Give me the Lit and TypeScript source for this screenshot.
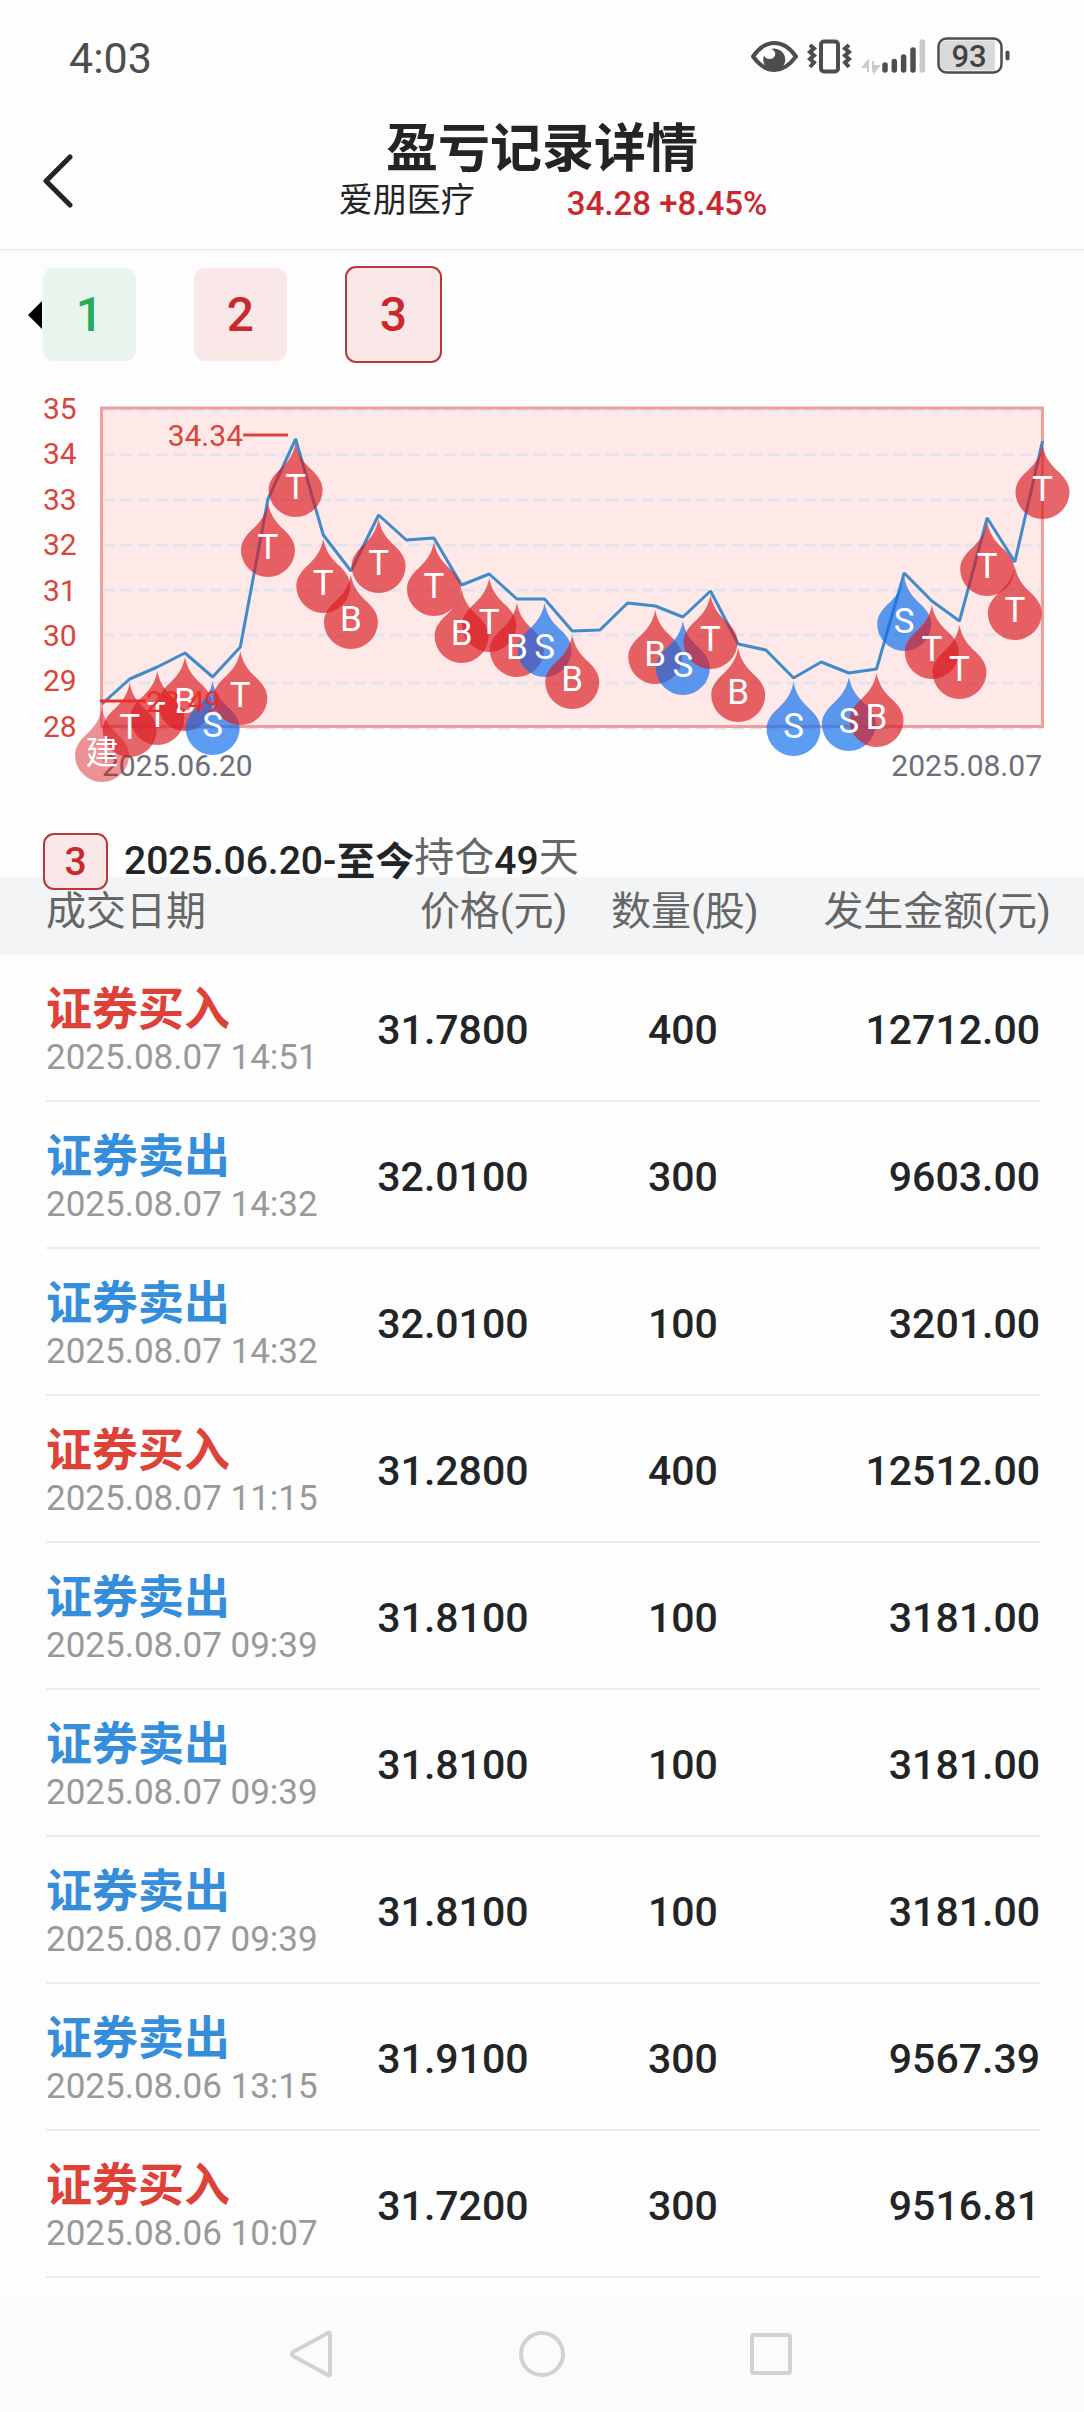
import { LitElement, html, svg, css } from "lit";
import { customElement, state } from "lit/decorators.js";
import { classMap } from "lit/directives/class-map.js";

type Mark = "T" | "B" | "S" | "建" | "";

/* Daily closing position in chart units, with the trade marker of that day. */
const DAYS: [number, Mark][] = [
  [704, "建"], [679, "T"], [667, "T"], [653, "B"], [677, "S"], [647, "T"], [499, "T"],
  [439, "T"], [535, "T"], [571, "B"], [515, "T"], [540, ""], [538, "T"], [585, "B"],
  [574, "T"], [599, "B"], [599, "S"], [631, "B"], [630, ""], [603, ""], [606, "B"],
  [617, "S"], [591, "T"], [644, "B"], [650, ""], [678, "S"], [662, ""], [673, "S"],
  [669, "B"], [573, "S"], [601, "T"], [621, "T"], [518, "T"], [562, "T"], [441, "T"],
];
const LEFT = 102;
const STEP = (1042.5 - LEFT) / (DAYS.length - 1);
const TOP = 390;
const px = (i: number) => LEFT + i * STEP;
const py = (y: number) => y - TOP;

const AXIS = [35, 34, 33, 32, 31, 30, 29, 28];
const GRID = [410, 455, 500, 545, 590, 635, 683, 728];

interface Trade {
  buy: boolean;
  time: string;
  price: string;
  count: string;
  amount: string;
}
const t = (buy: boolean, time: string, price: string, count: string, amount: string): Trade =>
  ({ buy, time, price, count, amount });
const TRADES: Trade[] = [
  t(true, "2025.08.07 14:51", "31.7800", "400", "12712.00"),
  t(false, "2025.08.07 14:32", "32.0100", "300", "9603.00"),
  t(false, "2025.08.07 14:32", "32.0100", "100", "3201.00"),
  t(true, "2025.08.07 11:15", "31.2800", "400", "12512.00"),
  t(false, "2025.08.07 09:39", "31.8100", "100", "3181.00"),
  t(false, "2025.08.07 09:39", "31.8100", "100", "3181.00"),
  t(false, "2025.08.07 09:39", "31.8100", "100", "3181.00"),
  t(false, "2025.08.06 13:15", "31.9100", "300", "9567.39"),
  t(true, "2025.08.06 10:07", "31.7200", "300", "9516.81"),
];

@customElement("trend-chart")
class TrendChart extends LitElement {
  static styles = css`
    :host { display: block; }
    svg { display: block; width: 100%; height: auto; font-family: Roboto, "Noto Sans CJK SC", sans-serif; }
    .axis { font-size: 30px; fill: #d8453c; }
    .date { font-size: 30px; fill: #6c6f78; }
    .grid { stroke: #e1e3ee; stroke-width: 3; stroke-dasharray: 12 6; }
    .area { fill: #ffe8e8; }
    .frame { fill: none; stroke: #f09e9b; stroke-width: 3; }
    .line { fill: none; stroke: #3f8bcb; stroke-width: 3; stroke-linejoin: bevel; }
    .drop { fill: #d91e23; fill-opacity: 0.68; }
    .drop.sell { fill: #0f6eee; }
    .drop.open { fill-opacity: 0.48; }
    .mark { font-size: 35px; fill: #fff; text-anchor: middle; }
    .mark.open { font-size: 33px; }
    .leader { stroke: #d8453c; stroke-width: 3; }
    .low { fill: #ee2d2a; }
    .leader.low { stroke: #ee2d2a; }
  `;

  render() {
    const points = DAYS.map(([y], i) => `${px(i)},${py(y)}`).join(" ");
    const marks = DAYS.map(([y, mark], i) => ({ x: px(i), y: py(y), mark })).filter((d) => d.mark);
    return html`<svg viewBox="0 0 1084 404" role="img" aria-label="2025.06.20 - 2025.08.07">
      <rect class="area" x="101" y=${py(408)} width="942" height="319"></rect>
      ${GRID.map((y) => svg`<line class="grid" x1="102" x2="1043" y1=${py(y)} y2=${py(y)}></line>`)}
      <rect class="frame" x="101.5" y=${py(408)} width="941" height="318.5"></rect>
      ${AXIS.map((v, i) => svg`<text class="axis" x="43" y=${29 + Math.round(i * 45.4)}>${v}</text>`)}
      <text class="date" x="102" y=${py(776)}>2025.06.20</text>
      <text class="date" x="1042" y=${py(776)} text-anchor="end">2025.08.07</text>
      <polyline class="line" points=${points}></polyline>
      ${marks.map((d) => svg`<path
        class=${`drop ${d.mark === "S" ? "sell" : ""} ${d.mark === "建" ? "open" : ""}`}
        transform=${`translate(${d.x} ${d.y})`}
        d="M0 4C2 15 7 22 14 29C21 35 27 42 27 51A27 27 0 0 1 -27 51C-27 42 -21 35 -14 29C-7 22 -2 15 0 4Z"></path>`)}
      ${marks.map((d) => svg`<text class=${`mark ${d.mark === "建" ? "open" : ""}`} x=${d.x} y=${d.y + 60}>${d.mark}</text>`)}
      <line class="leader" x1="243" x2="288" y1=${py(435)} y2=${py(435)}></line>
      <text class="axis" x="243" y=${py(446)} text-anchor="end">34.34</text>
      <line class="leader low" x1="100" x2="146" y1=${py(701)} y2=${py(701)}></line>
      <text class="axis low" x="146" y=${py(712)}>28.49</text>
    </svg>`;
  }
}

@customElement("status-bar")
class StatusBar extends LitElement {
  static styles = css`
    :host { display: flex; align-items: center; justify-content: space-between; height: 112px; padding: 0 72px 0 69px; color: #4d4d4d; font-family: Roboto, sans-serif; }
    .clock { padding-top: 4px; font-size: 43px; line-height: 48px; }
    .icons { display: block; }
    .level { font-size: 31px; font-weight: 500; fill: #434343; text-anchor: middle; }
  `;
  render() {
    return html`
      <time class="clock">4:03</time>
      <svg class="icons" width="262" height="44" viewBox="0 0 262 44" fill="none">
        <path d="M3 22.500C10 12.500 17 9 24.500 9S39 12.500 46 22.500C39 32 32 36 24.500 36S10 32 3 22.500Z" stroke="#4d4d4d" stroke-width="4" stroke-linejoin="round"></path>
        <path d="M21 15A11 11 0 1 1 14 21.500C16 26.500 23.500 26 25 21.500C25.800 18.500 24.500 16 21 15Z" fill="#4d4d4d"></path>
        <rect x="71" y="7.500" width="17" height="30" rx="3" stroke="#4d4d4d" stroke-width="4"></rect>
        <path d="M60 11l4 3.500-4 3.500 4 3.500-4 3.500 4 3.500-4 4.500M99 11l-4 3.500 4 3.500-4 3.500 4 3.500-4 3.500 4 4.500" stroke="#4d4d4d" stroke-width="4"></path>
        <path d="M118 38V28M118 27L113 33H118ZM123 27V38M124 38L129 32H124Z" stroke="#ccc" fill="#ccc" stroke-width="2"></path>
        <path d="M135 31v5M144.300 27.500v8.500M153.600 23v13M163 16v20" stroke="#4d4d4d" stroke-width="5.500" stroke-linecap="round"></path>
        <path d="M172.300 8v28" stroke="#c9c9c9" stroke-width="5.500" stroke-linecap="round"></path>
        <rect x="188.500" y="4.500" width="63" height="34" rx="8" fill="#fff" stroke="#4d4d4d" stroke-width="2.500"></rect>
        <path d="M196 6.500H245V36.500H196A6 6 0 0 1 190 30.500V12.500A6 6 0 0 1 196 6.500Z" fill="#d9d9d9"></path>
        <path d="M257.500 18.500v6" stroke="#4d4d4d" stroke-width="4" stroke-linecap="round"></path>
        <text class="level" x="219" y="33">93</text>
      </svg>`;
  }
}

@customElement("app-root")
class AppRoot extends LitElement {
  static styles = css`
    :host { display: block; background: #fdfdfd; color: #222426; font-family: "Noto Sans CJK SC", sans-serif; }
    * { box-sizing: border-box; }
    button { margin: 0; padding: 0; border: 0; background: none; font: inherit; color: inherit; }
    .page { display: flex; flex-direction: column; min-height: 100vh; }
    .change, .tab, .badge, .span, .trades { font-family: Roboto, "Noto Sans CJK SC", sans-serif; }
    .header { display: grid; grid-template-columns: 86px 1fr 86px; align-items: center; height: 139px; border-bottom: 2px solid #f0f0f0; }
    .back { justify-self: start; padding-left: 43px; }
    .back svg { display: block; }
    .heading { display: flex; flex-direction: column; align-items: center; padding-bottom: 25px; }
    .title { margin: 0; font-size: 52px; line-height: 60px; font-weight: 700; }
    .quote { display: flex; align-items: center; gap: 92px; padding-left: 22px; font-size: 34px; line-height: 46px; }
    .change { padding-top: 12px; font-size: 33px; line-height: 34px; font-weight: 500; color: #c7292e; }
    .rounds { display: flex; align-items: center; height: 127px; padding: 0 28px; }
    .arrow { display: block; margin-right: 1px; }
    .tabs { display: flex; align-items: center; gap: 58px; }
    .tab { width: 93px; height: 93px; border-radius: 11px; background: #fae8e8; color: #c9282d; font-size: 48px; line-height: 93px; font-weight: 500; text-align: center; }
    .tab.gain { background: #e8f5ec; color: #29aa5b; }
    .tab.active { width: 97px; height: 97px; border: 2px solid #b5383c; }
    .chart { margin-top: 12px; }
    .holding { display: flex; align-items: center; height: 57px; margin: 39px 43px -13px; position: relative; font-size: 39px; line-height: 57px; }
    .badge { width: 65px; height: 57px; margin-right: 16px; border: 2px solid #b5383c; border-radius: 11px; background: #fae8e8; color: #c9282d; font-size: 39px; line-height: 54px; font-weight: 500; text-align: center; }
    .span { font-weight: 500; }
    .now { padding-bottom: 6px; font-weight: 700; }
    .unit { padding-bottom: 14px; font-size: 40px; color: #666; }
    .trades { width: 100%; border-collapse: collapse; table-layout: fixed; }
    .c-name { width: 32%; }
    .c-price { width: 21%; }
    .c-count { width: 20%; }
    th { height: 78px; padding: 0 0 8px; background: #f3f4f6; color: #666; font-size: 40px; line-height: 48px; font-weight: 400; white-space: nowrap; text-align: right; }
    th:first-child { padding-left: 46px; text-align: left; }
    th:nth-child(2) { padding-right: 7px; }
    th:nth-child(3) { padding-left: 4px; text-align: center; }
    th:last-child { padding-right: 33px; }
    tbody tr { background: linear-gradient(#ececec, #ececec) 46px 100% / calc(100% - 90px) 2px no-repeat; }
    td { height: 147px; padding: 2px 0 0; font-size: 41px; line-height: 48px; font-weight: 500; white-space: nowrap; text-align: center; }
    td:first-child { padding: 8px 0 0 46px; text-align: left; }
    td:nth-child(2) { padding-right: 46px; text-align: right; }
    td:last-child { padding-right: 44px; text-align: right; }
    .side { display: block; font-family: "Noto Sans CJK SC", sans-serif; font-size: 46px; line-height: 50px; font-weight: 700; color: #348edb; }
    .side.buy { color: #dd4137; }
    .time { display: block; font-size: 35px; line-height: 56px; font-weight: 400; color: #999; }
    .nav { display: flex; align-items: center; justify-content: center; gap: 182px; height: 116px; margin-top: auto; background: #fbfbfb; }
    .nav svg { display: block; }
  `;

  @state() private round = 3;

  render() {
    return html`<div class="page">
      <status-bar></status-bar>
      <header class="header">
        <button class="back" aria-label="返回">
          <svg width="30" height="54" viewBox="0 0 30 54" fill="none" stroke="#222426" stroke-width="5" stroke-linecap="round" stroke-linejoin="round"><path d="M27 3L3 27L27 51"></path></svg>
        </button>
        <div class="heading">
          <h1 class="title">盈亏记录详情</h1>
          <div class="quote"><span>爱朋医疗</span><span class="change">34.28 +8.45%</span></div>
        </div>
      </header>
      <div class="rounds">
        <svg class="arrow" width="14" height="30" viewBox="0 0 14 30"><path d="M14 1V29L0 15Z"></path></svg>
        <div class="tabs">
          ${[1, 2, 3].map((n) => html`<button
            class=${classMap({ tab: true, gain: n === 1, active: n === this.round })}
            @click=${() => (this.round = n)}>${n}</button>`)}
        </div>
      </div>
      <trend-chart class="chart"></trend-chart>
      <div class="holding">
        <span class="badge">3</span>
        <span class="span">2025.06.20-</span><span class="now">至今</span><span class="unit">持仓</span><span class="span">49</span><span class="unit">天</span>
      </div>
      <table class="trades">
        <colgroup><col class="c-name"><col class="c-price"><col class="c-count"><col></colgroup>
        <thead><tr><th>成交日期</th><th>价格(元)</th><th>数量(股)</th><th>发生金额(元)</th></tr></thead>
        <tbody>
          ${TRADES.map((r) => html`<tr>
            <td>
              <span class=${classMap({ side: true, buy: r.buy })}>${r.buy ? "证券买入" : "证券卖出"}</span>
              <time class="time">${r.time}</time>
            </td>
            <td>${r.price}</td><td>${r.count}</td><td>${r.amount}</td>
          </tr>`)}
        </tbody>
      </table>
      <nav class="nav">
        <button aria-label="返回上一页"><svg width="48" height="52" viewBox="0 0 48 52" fill="none" stroke="#d2d2d2" stroke-width="4" stroke-linejoin="round"><path d="M42 5.500V46.500Q42 48 40 47L5 28Q3 26 5 24L40 5Q42 4 42 5.500Z"></path></svg></button>
        <button aria-label="主屏幕"><svg width="48" height="52" viewBox="0 0 48 52" fill="none" stroke="#d2d2d2" stroke-width="4"><circle cx="24" cy="26" r="21"></circle></svg></button>
        <button aria-label="最近任务"><svg width="48" height="52" viewBox="0 0 48 52" fill="none" stroke="#d2d2d2" stroke-width="4"><rect x="4" y="7" width="38" height="38" rx="2"></rect></svg></button>
      </nav>
    </div>`;
  }
}
